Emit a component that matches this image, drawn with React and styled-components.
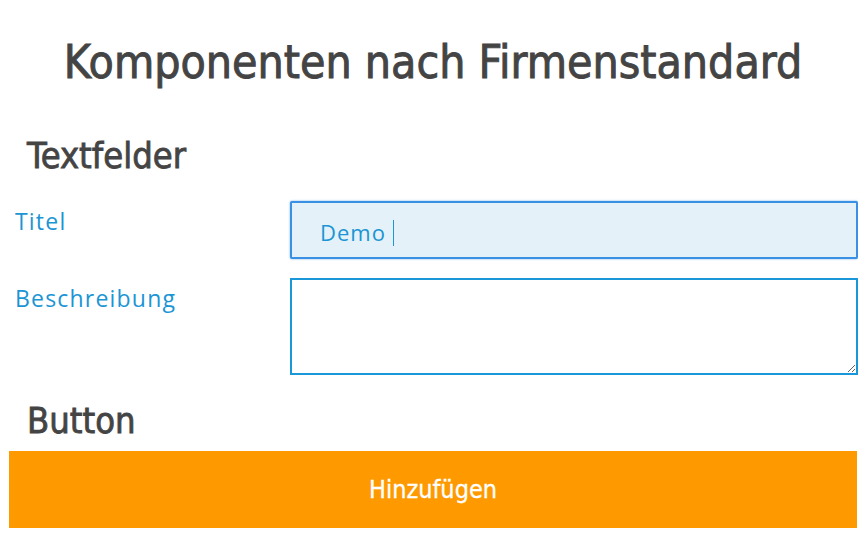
import React from 'react'
import styled, { createGlobalStyle } from 'styled-components'

const GlobalStyle = createGlobalStyle`
    body {
        margin: 8px;
        background: #fff;
        font-family: "Open Sans", "Noto Sans", sans-serif;
    }
`

const headFont = `"DejaVu Sans Condensed", "DejaVu Sans", sans-serif`

const Page = styled.div`
    display: flex;
    flex-direction: column;
`

const Title = styled.h1`
    margin: 24px 0 0;
    font-family: ${headFont};
    font-weight: 400;
    font-size: 46px;
    line-height: 60px;
    color: #444;
    -webkit-text-stroke: 0.9px #444;
    text-align: center;
`

const SectionTitle = styled.h2`
    margin: ${p => p.top}px 0 0;
    padding-left: 19px;
    font-family: ${headFont};
    font-weight: 400;
    font-size: 36px;
    line-height: 44px;
    color: #444;
    -webkit-text-stroke: 0.8px #444;
`

const Fields = styled.div`
    display: flex;
    flex-direction: column;
    gap: 19px;
    margin-top: 23px;
`

const Row = styled.div`
    display: grid;
    grid-template-columns: 282px 1fr;
    align-items: start;
`

const Label = styled.label`
    padding: 5px 0 0 7px;
    font-size: 23px;
    line-height: 30px;
    letter-spacing: 1.2px;
    color: #1b95d4;
`

const InputWrap = styled.div`
    position: relative;
`

const TextInput = styled.input`
    box-sizing: border-box;
    width: 100%;
    height: 58px;
    padding: 4px 0 0 28px;
    border: 2px solid #3a90e2;
    border-radius: 2px;
    box-shadow: 0 0 2px rgba(58, 144, 226, 0.8);
    background: #e4f1f8;
    outline: none;
    font-family: "Open Sans", "Noto Sans", sans-serif;
    font-size: 22px;
    letter-spacing: 1px;
    color: #1b95d4;
    caret-color: transparent;
`

const Caret = styled.span`
    position: absolute;
    left: 103px;
    top: 19px;
    width: 1px;
    height: 26px;
    background: #1b95d4;
`

const TextArea = styled.textarea`
    box-sizing: border-box;
    width: 100%;
    height: 97px;
    margin: 0;
    border: 2px solid #1a97d8;
    background: #fff;
    outline: none;
    display: block;
`

const AddButton = styled.button`
    margin: 8px 1px 0;
    height: 77px;
    border: none;
    background: #fe9a00;
    color: #fff;
    font-family: ${headFont};
    font-size: 25px;
    -webkit-text-stroke: 0.3px #fff;
    cursor: pointer;
`

export default function App() {
    return (
        <Page>
            <GlobalStyle />
            <Title>Komponenten nach Firmenstandard</Title>
            <SectionTitle top={42}>Textfelder</SectionTitle>
            <Fields>
                <Row>
                    <Label htmlFor="titel">Titel</Label>
                    <InputWrap>
                        <TextInput id="titel" defaultValue="Demo" readOnly />
                        <Caret />
                    </InputWrap>
                </Row>
                <Row>
                    <Label htmlFor="beschreibung">Beschreibung</Label>
                    <TextArea id="beschreibung" />
                </Row>
            </Fields>
            <SectionTitle top={24}>Button</SectionTitle>
            <AddButton>Hinzufügen</AddButton>
        </Page>
    )
}
